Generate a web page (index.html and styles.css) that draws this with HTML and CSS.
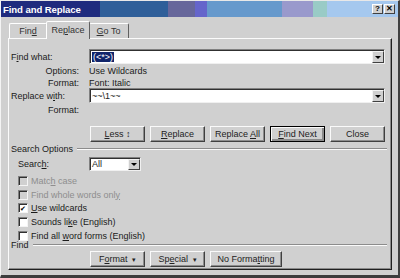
FILE: index.html
```html
<!DOCTYPE html>
<html lang="en">
<head>
    <meta charset="UTF-8">
    <title>Find and Replace</title>
    <link rel="stylesheet" href="styles.css">
</head>
<body>
    <div class="window">
        <div class="titlebar">
            <span class="title">Find and Replace</span>
            <div class="caption-buttons">
                <span class="cap-btn">?</span>
                <span class="cap-btn">&#x2715;</span>
            </div>
        </div>

        <div class="tabs">
            <span class="tab">Fin<u>d</u></span>
            <span class="tab active">Re<u>p</u>lace</span>
            <span class="tab"><u>G</u>o To</span>
        </div>

        <div class="panel">
            <div class="row field-row first">
                <span class="label">F<u>i</u>nd what:</span>
                <div class="combo">
                    <span class="combo-text"><span class="selected">(&lt;*&gt;)</span></span>
                    <span class="drop"></span>
                </div>
            </div>
            <div class="row info-row">
                <span class="label right">Options:</span>
                <span class="value">Use Wildcards</span>
            </div>
            <div class="row info-row">
                <span class="label right">Format:</span>
                <span class="value">Font: Italic</span>
            </div>
            <div class="row field-row">
                <span class="label">Replace w<u>i</u>th:</span>
                <div class="combo">
                    <span class="combo-text">~~\1~~</span>
                    <span class="drop"></span>
                </div>
            </div>
            <div class="row info-row">
                <span class="label right">Format:</span>
                <span class="value"></span>
            </div>

            <div class="button-row">
                <span class="button"><u>L</u>ess &#x2195;</span>
                <span class="button"><u>R</u>eplace</span>
                <span class="button">Replace <u>A</u>ll</span>
                <span class="button default"><u>F</u>ind Next</span>
                <span class="button">Close</span>
            </div>

            <div class="group-title">
                <span>Search Options</span>
                <span class="etched"></span>
            </div>

            <div class="row search-row">
                <span class="label indent">Searc<u>h</u>:</span>
                <div class="select">
                    <span class="combo-text">All</span>
                    <span class="drop"></span>
                </div>
            </div>

            <div class="checks">
                <label class="check disabled"><span class="box"></span><span>Matc<u>h</u> case</span></label>
                <label class="check disabled"><span class="box"></span><span>Find whole words onl<u>y</u></span></label>
                <label class="check"><span class="box checked"></span><span><u>U</u>se wildcards</span></label>
                <label class="check"><span class="box"></span><span>Sounds li<u>k</u>e (English)</span></label>
                <label class="check"><span class="box"></span><span>Find all <u>w</u>ord forms (English)</span></label>
            </div>

            <div class="group-title find-title">
                <span>Find</span>
                <span class="etched"></span>
            </div>

            <div class="button-row bottom">
                <span class="button">F<u>o</u>rmat <span class="arrow">&#x25BE;</span></span>
                <span class="button">Sp<u>e</u>cial <span class="arrow">&#x25BE;</span></span>
                <span class="button wide">No Forma<u>t</u>ting</span>
            </div>
        </div>
    </div>
</body>
</html>
```

FILE: styles.css
```css
body {
    margin: 0;
    font-family: "Liberation Sans", Arial, sans-serif;
    font-size: 9px;
    color: #1a1a1a;
    background: #3a3a3a;
}
u {
    text-decoration-thickness: 1px;
    text-underline-offset: 1px;
}
.window {
    width: 400px;
    height: 278px;
    box-sizing: border-box;
    background: #d0d0d0;
    border-left: 1px solid #f4f4f4;
    border-top: 1px solid #e8e8e8;
    border-right: 2px solid #404040;
    border-bottom: 3px solid #3c3c3c;
    display: flex;
    flex-direction: column;
}
.titlebar {
    height: 16px;
    display: flex;
    align-items: center;
    justify-content: space-between;
    padding: 0 2px;
    background: linear-gradient(to right,
        #1f2b7e 0 99px,
        #2f5f99 99px 167px,
        #67679b 167px 194px,
        #6565cb 194px 206px,
        #6699cc 206px 281px,
        #9999cc 281px 312px,
        #99cbc6 312px 326px,
        #a5c8ee 326px);
}
.title {
    color: #fff;
    font-weight: bold;
    font-size: 9.6px;
    letter-spacing: -0.1px;
}
.caption-buttons {
    display: flex;
    gap: 1px;
    margin-right: 1px;
}
.cap-btn {
    width: 11px;
    height: 10px;
    box-sizing: border-box;
    background: #d0d0d0;
    border: 1px solid;
    border-color: #fff #404040 #404040 #fff;
    font-size: 8px;
    font-weight: bold;
    line-height: 8px;
    text-align: center;
    color: #000;
}
.tabs {
    height: 21px;
    display: flex;
    align-items: flex-end;
    padding-left: 8px;
}
.tab {
    height: 15px;
    box-sizing: border-box;
    padding-top: 2px;
    text-align: center;
    border: 1px solid;
    border-bottom: none;
    border-color: #fff #606060 transparent #fff;
    border-radius: 2px 2px 0 0;
    color: #333;
}
.tab:first-child {
    width: 38px;
}
.tab.active {
    width: 44px;
    height: 18px;
    margin: 0 -1px -1px -1px;
    padding-top: 3px;
    background: #d0d0d0;
    position: relative;
    z-index: 1;
}
.tab:last-child {
    width: 40px;
    border-left: none;
}
.panel {
    margin-left: 7px;
    width: 384px;
    height: 232px;
    box-sizing: border-box;
    border: 1px solid;
    border-color: #fbfbfb #202020 #202020 #fbfbfb;
    box-shadow: inset -1px -1px #8a8a8a;
    padding-left: 2px;
}
.row {
    display: flex;
    align-items: center;
}
.label {
    width: 78px;
    flex: none;
}
.label.right {
    width: 68px;
    margin-right: 10px;
    text-align: right;
}
.label.indent {
    padding-left: 7px;
    box-sizing: border-box;
}
.field-row {
    height: 15px;
}
.field-row.first {
    margin-top: 10px;
}
.info-row {
    height: 11px;
    margin-top: 1px;
}
.combo {
    width: 296px;
    height: 15px;
    box-sizing: border-box;
    background: #fff;
    border: 1px solid;
    border-color: #808080 #f0f0f0 #f0f0f0 #808080;
    box-shadow: inset 1px 1px #303030;
    display: flex;
    align-items: center;
    justify-content: space-between;
}
.combo-text {
    padding-left: 2px;
    color: #222;
}
.selected {
    background: #10246a;
    color: #fff;
    padding: 0 1px;
}
.drop {
    width: 12px;
    height: 12px;
    box-sizing: border-box;
    margin-top: 1px;
    background: #d0d0d0;
    border: 1px solid;
    border-color: #f4f4f4 #404040 #404040 #f4f4f4;
    display: flex;
    align-items: center;
    justify-content: center;
}
.drop::after {
    content: "";
    border-left: 3px solid transparent;
    border-right: 3px solid transparent;
    border-top: 3px solid #000;
}
.button-row {
    display: flex;
    gap: 5px;
    margin: 11px 0 0 79px;
}
.button {
    width: 55px;
    height: 16px;
    box-sizing: border-box;
    background: #d0d0d0;
    border: 1px solid;
    border-color: #fafafa #404040 #404040 #fafafa;
    box-shadow: inset -1px -1px #8c8c8c;
    text-align: center;
    line-height: 14px;
    white-space: nowrap;
    color: #222;
}
.button.default {
    border-color: #000;
    box-shadow: inset 1px 1px #fafafa, inset -2px -2px #8c8c8c;
}
.button.wide {
    width: 72px;
}
.arrow {
    font-size: 7px;
    margin-left: 2px;
}
.group-title {
    display: flex;
    align-items: center;
    gap: 4px;
    height: 12px;
    margin: 1px 4px 0 0;
}
.etched {
    flex: 1;
    height: 0;
    border-top: 1px solid #8c8c8c;
    border-bottom: 1px solid #fafafa;
}
.search-row {
    height: 14px;
    margin-top: 2px;
}
.select {
    width: 52px;
    height: 14px;
    box-sizing: border-box;
    background: #fff;
    border: 1px solid;
    border-color: #808080 #f0f0f0 #f0f0f0 #808080;
    box-shadow: inset 1px 1px #303030;
    display: flex;
    align-items: center;
    justify-content: space-between;
}
.select .drop {
    height: 11px;
}
.checks {
    display: flex;
    flex-direction: column;
    margin-top: 3px;
    padding-left: 7px;
}
.check {
    height: 13.8px;
    display: flex;
    align-items: center;
    gap: 3px;
}
.check.disabled {
    color: #8e8e8e;
}
.box {
    width: 10px;
    height: 10px;
    box-sizing: border-box;
    background: #fff;
    border: 1px solid;
    border-color: #808080 #f4f4f4 #f4f4f4 #808080;
    box-shadow: inset 1px 1px #303030;
    display: flex;
    align-items: center;
    justify-content: center;
}
.check.disabled .box {
    background: #d0d0d0;
}
.box.checked::after {
    content: "\2714";
    font-size: 7px;
    line-height: 7px;
    color: #000;
}
.find-title {
    height: 10px;
    margin-top: -3px;
}
.button-row.bottom {
    margin-top: 1px;
}
```
